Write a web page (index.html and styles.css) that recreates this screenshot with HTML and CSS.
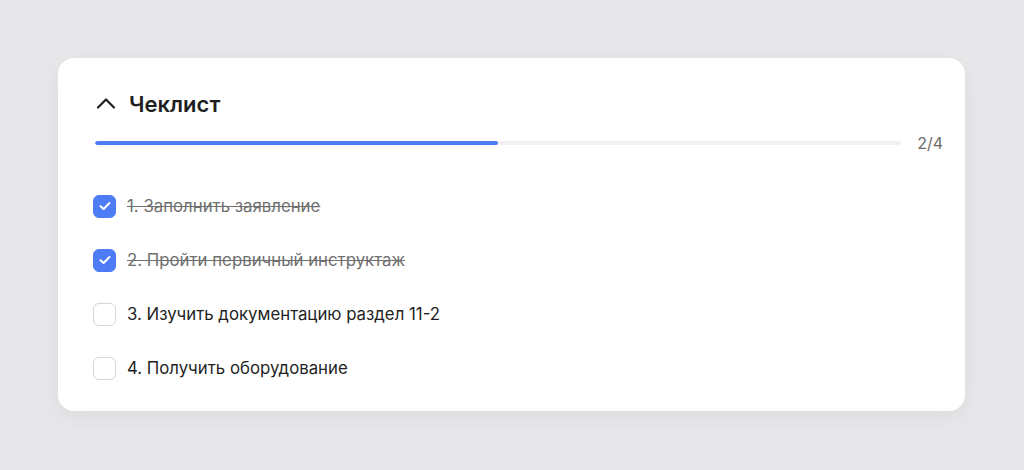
FILE: index.html
```html
<!DOCTYPE html>
<html lang="ru">
<head>
<meta charset="utf-8">
<link rel="stylesheet" href="styles.css">
</head>
<body>
<div class="card">
  <div class="header">
    <svg class="chevron" width="24" height="24" viewBox="0 0 24 24"><path d="M4 15.5 L12 7.5 L20 15.5" fill="none" stroke="#1f1f1f" stroke-width="2.2" stroke-linecap="round" stroke-linejoin="round"/></svg>
    <span class="title">Чеклист</span>
  </div>
  <div class="progress-row">
    <div class="track"><div class="fill" style="width:50%"></div></div>
    <span class="count">2/4</span>
  </div>
  <ul class="list">
    <li class="item done"><span class="box checked"><svg width="14" height="14" viewBox="0 0 14 14"><path d="M2.5 7.2 L5.6 10 L11.5 4" fill="none" stroke="#fff" stroke-width="2" stroke-linecap="round" stroke-linejoin="round"/></svg></span><span class="label">1. Заполнить заявление</span></li>
    <li class="item done"><span class="box checked"><svg width="14" height="14" viewBox="0 0 14 14"><path d="M2.5 7.2 L5.6 10 L11.5 4" fill="none" stroke="#fff" stroke-width="2" stroke-linecap="round" stroke-linejoin="round"/></svg></span><span class="label">2. Пройти первичный инструктаж</span></li>
    <li class="item"><span class="box"></span><span class="label">3. Изучить документацию раздел 11-2</span></li>
    <li class="item"><span class="box"></span><span class="label">4. Получить оборудование</span></li>
  </ul>
</div>
</body>
</html>
```
FILE: styles.css
```css
html, body { margin: 0; padding: 0; }
body {
  background: #e8e8ea;
  font-family: Inter, Roboto, "Liberation Sans", sans-serif;
  padding: 58px 0 0 58px;
  height: 470px;
  box-sizing: border-box;
}
.card {
  width: 907px;
  box-sizing: border-box;
  background: #fff;
  border-radius: 16px;
  padding: 32px 22px 16px 35px;
  box-shadow: 0 6px 24px rgba(0,0,0,0.06);
}
.header {
  display: flex;
  align-items: center;
  height: 28px;
}
.chevron { margin-left: 1px; margin-right: 11px; }
.title {
  font-size: 22px;
  font-weight: 600;
  color: #1f1f1f;
  line-height: 28px;
}
.progress-row {
  display: flex;
  align-items: center;
  margin-top: 15px;
  height: 20px;
}
.track {
  margin-left: 2px;
  width: 807px;
  height: 4px;
  border-radius: 2px;
  background: #f1f1f2;
  overflow: hidden;
}
.fill { height: 100%; background: #4e7cf5; border-radius: 2px; }
.count {
  margin-left: 16px;
  font-size: 16px;
  color: #6b6b6b;
  line-height: 20px;
}
.list {
  list-style: none;
  margin: 26px 0 0 0;
  padding: 0;
}
.item {
  display: flex;
  align-items: center;
  height: 54px;
}
.box {
  width: 23px;
  height: 23px;
  box-sizing: border-box;
  border: 1px solid #d6d6d8;
  border-radius: 6px;
  margin-right: 11px;
  display: flex;
  align-items: center;
  justify-content: center;
}
.box.checked { background: #4e7cf5; border-color: #4e7cf5; }
.label {
  font-size: 16.8px;
  color: #1f1f1f;
}
.done .label {
  color: #6f6f6f;
  text-decoration: line-through;
  text-decoration-color: #6f6f6f;
}
```
